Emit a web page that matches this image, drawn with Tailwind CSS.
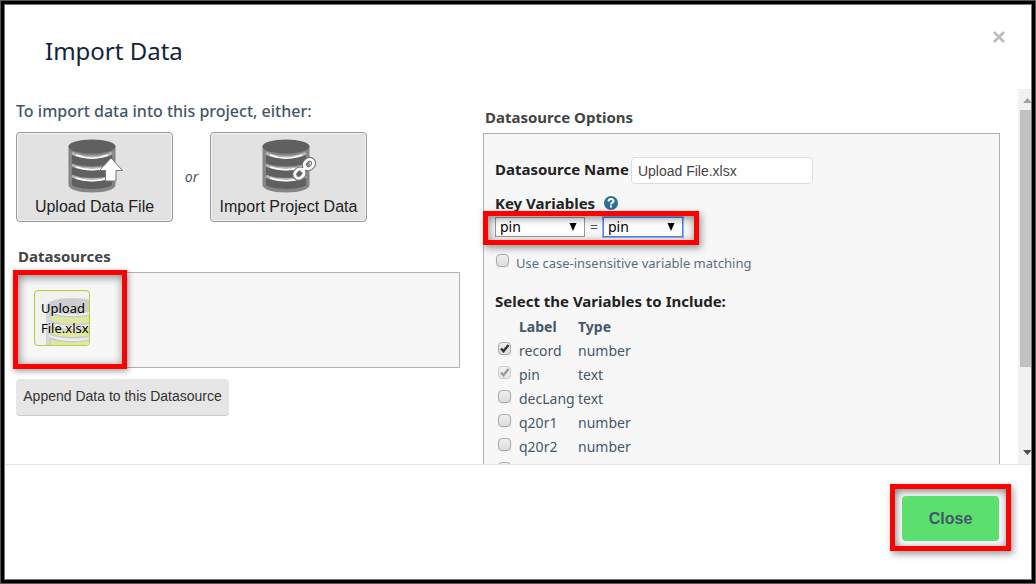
<!DOCTYPE html>
<html lang="en">
<head>
<meta charset="utf-8">
<title>Import Data</title>
<script src="https://cdn.jsdelivr.net/npm/@tailwindcss/browser@4"></script>
</head>
<body class="flex h-screen flex-col overflow-hidden border border-[#555] bg-white font-['Noto_Sans',sans-serif] text-[#44576a]">
<svg class="hidden" aria-hidden="true">
  <symbol id="database" viewBox="0 0 56 56">
    <path d="M1.500 8v39c0 4 9 7.500 23.500 7.500s23.500-3.500 23.500-7.500V8z" fill="#858585"/>
    <path d="M5 16.500c9 4.500 31 4.500 40 0v9c-9 3.500-31 3.500-40 0zM5 28c9 4.500 31 4.500 40 0v9c-9 3.500-31 3.500-40 0zM5 39c9 4.500 31 4.500 40 0v8.500c-9 4.500-31 4.500-40 0z" fill="#606060"/>
    <path d="M5 15c9 5.500 31 5.500 40 0M5 27c9 5 31 5 40 0M5 38c9 5 31 5 40 0" stroke="#b5b5b5" stroke-width="3" fill="none"/>
    <path d="M9 17c10 4 22 4 32 0M9 29c10 3.500 22 3.500 32 0M9 40c10 3.500 22 3.500 32 0" stroke="#fff" stroke-width="1.600" fill="none"/>
    <ellipse cx="25" cy="8.500" rx="23.500" ry="7" fill="#606060"/>
  </symbol>
</svg>
<div class="flex min-h-0 flex-1 flex-col border-3 border-black">
<div class="flex min-h-0 flex-1 flex-col border border-[#777]" role="dialog" aria-labelledby="title">
  <header class="flex h-21 shrink-0 items-start justify-between pr-6 pl-10">
    <h1 id="title" class="pt-7 text-2xl leading-9 text-[#14233c]">Import Data</h1>
    <button type="button" aria-label="Close dialog" class="mt-6 flex size-4 items-center justify-center">
      <svg class="size-3 text-[#bdbdbd]" viewBox="0 0 12 12" fill="none" stroke="currentColor" stroke-width="2.8"><path d="M1 1l10 10M11 1L1 11"/></svg>
    </button>
  </header>

  <main class="flex min-h-0 flex-1 overflow-hidden pl-[11px]">
    <section class="w-111 shrink-0 pt-[10px]">
      <p class="text-base leading-6 font-medium text-[#44576a]">To import data into this project, either:</p>
      <div class="mt-[9px] flex items-center">
        <button type="button" class="flex h-[90px] w-[157px] flex-col items-center rounded border border-[#999] bg-[#e2e2e2] pt-[5px] font-['Liberation_Sans',sans-serif] text-base text-[#222] inset-ring inset-ring-[#f4f4f4]">
          <svg class="size-14 shrink-0" viewBox="0 0 56 56">
            <use href="#database"/>
            <path d="M44 20L55.500 32.500h-6.500v10.500H38.500V32.500H32.500z" fill="#fff" stroke="#777"/>
          </svg>
          <span class="leading-[26px]">Upload Data File</span>
        </button>
        <em class="w-[37px] text-center text-sm">or</em>
        <button type="button" class="flex h-[90px] w-[157px] flex-col items-center rounded border border-[#999] bg-[#e2e2e2] pt-[5px] font-['Liberation_Sans',sans-serif] text-base text-[#222] inset-ring inset-ring-[#f4f4f4]">
          <svg class="size-14 shrink-0" viewBox="0 0 56 56">
            <use href="#database"/>
            <g transform="rotate(-45 43 31)" fill="none">
              <g stroke="#777" stroke-width="5"><rect x="31.500" y="27" width="10" height="8" rx="4"/><rect x="45" y="27" width="10" height="8" rx="4"/><path d="M39 31h8"/></g>
              <g stroke="#fff" stroke-width="2.800"><rect x="31.500" y="27" width="10" height="8" rx="4"/><rect x="45" y="27" width="10" height="8" rx="4"/><path d="M39 31h8"/></g>
            </g>
          </svg>
          <span class="leading-[26px]">Import Project Data</span>
        </button>
      </div>

      <h2 class="mt-[22px] pl-0.5 text-[15px] leading-6 font-bold text-[#444]">Datasources</h2>
      <div class="relative mt-1 flex h-24 border border-[#b0b0b0] bg-[#f7f7f7] pt-[17px] pl-[17px]">
        <button type="button" class="relative size-14 overflow-hidden rounded border border-[#b4cf35] bg-[#f1f1f1] pl-1.5 text-left text-[13px] leading-5 text-black">
          <svg class="absolute top-1.5 left-2.5 size-14" viewBox="0 0 56 56">
            <path d="M1 9v48h54V9z" fill="#d6d6d6"/>
            <path d="M4 13v44h51V13z" fill="#eee"/>
            <ellipse cx="27" cy="9" rx="26" ry="8" fill="#cecece"/>
            <path d="M5 16c10 5 34 5 45 0v8c-10 5-35 5-45 0zM5 29c10 5 34 5 45 0v8c-10 5-35 5-45 0zM5 41c10 5 34 5 45 0v15H5z" fill="#dfe7a3" stroke="#ccc" stroke-width="1.500"/>
          </svg>
          <span class="relative block">Upload<br>File.xlsx</span>
        </button>
        <div class="pointer-events-none absolute -top-[3px] -left-1 h-[99px] w-[114px] border-5 border-[#f00] shadow-[1px_2px_6px_#0006,inset_1px_2px_10px_#0007]"></div>
      </div>
      <button type="button" class="mt-[11px] h-[37px] w-[213px] rounded-sm border-b border-[#ccc] bg-[#e6e6e6] pb-0.5 font-['Liberation_Sans',sans-serif] text-sm whitespace-nowrap text-[#333]">Append Data to this Datasource</button>
    </section>

    <section class="ml-[23px] min-w-0 flex-1 pt-4">
      <h2 class="pl-0.5 text-[15px] leading-6 font-bold text-[#444]">Datasource Options</h2>
      <div class="mt-1 h-120 border border-[#b0b0b0] bg-[#f7f7f7] pt-[23px] pl-[11px]">
        <div class="flex items-start gap-0.5">
          <label for="dsname" class="text-[15px] leading-6 font-bold text-[#222]">Datasource Name</label>
          <input id="dsname" type="text" value="Upload File.xlsx" class="h-[27px] w-[182px] rounded border border-[#dcdcdc] bg-white px-1.5 font-['Liberation_Sans',sans-serif] text-sm text-[#444]">
        </div>
        <div class="mt-[7px] flex h-6 items-center gap-[9px]">
          <h3 class="text-[15px] leading-6 font-bold text-[#222]">Key Variables</h3>
          <a href="#" aria-label="Help on key variables" class="flex size-3.5 items-center justify-center rounded-full bg-[#2a7099]">
            <svg class="size-3.5" viewBox="0 0 14 14" fill="none" stroke="#fff" stroke-width="2"><path d="M4.500 5.500C4.500 2.300 9.500 2.300 9.500 5c0 1.700-2.500 1.500-2.500 3.500M7 9.500v2"/></svg>
          </a>
        </div>
        <div class="relative mt-0.5 flex h-5 w-[204px] items-center text-sm text-black">
          <span class="relative">
            <select aria-label="Datasource key" class="block h-5 w-[90px] appearance-none border border-[#999] bg-white pl-1 text-sm leading-4"><option>pin</option></select>
            <svg class="pointer-events-none absolute top-1.5 right-2 size-2" viewBox="0 0 8 8"><path d="M0.500 0h7L4 8z"/></svg>
          </span>
          <span class="w-[18px] text-center text-[#44576a]">=</span>
          <span class="relative">
            <select aria-label="Project key" class="block h-5 w-20 appearance-none border border-[#4d86e8] bg-white pl-1 text-sm leading-4 ring ring-[#4d86e8]/60"><option>pin</option></select>
            <svg class="pointer-events-none absolute top-1.5 right-2 size-2" viewBox="0 0 8 8"><path d="M0.500 0h7L4 8z"/></svg>
          </span>
          <div class="pointer-events-none absolute -top-1.5 -left-3 h-[34px] w-[216px] border-5 border-[#f00] shadow-[2px_3px_7px_#0006,inset_1px_2px_8px_#0007]"></div>
        </div>
        <div class="mt-3.5 flex h-6 gap-[7px]">
          <input id="ci" type="checkbox" class="mt-[3px] ml-px size-[13px] appearance-none rounded-sm border border-[#aaa] bg-linear-to-b from-[#eee] to-[#ddd] shadow-xs">
          <label for="ci" class="text-[13px] leading-6 text-[#5a6e7e]">Use case-insensitive variable matching</label>
        </div>
        <h3 class="mt-3.5 text-[15px] leading-6 font-bold text-[#222]">Select the Variables to Include:</h3>
        <table class="mt-0.5 table-fixed text-left text-sm leading-6">
          <thead><tr><th class="w-6 p-0"></th><th class="w-[59px] p-0 font-bold">Label</th><th class="w-16 p-0 font-bold">Type</th></tr></thead>
          <tbody>
            <tr class="h-6"><td class="p-0 pt-px pl-[3px] align-top"><span class="relative mt-0.5 block size-[13px]"><input id="v1" type="checkbox" checked class="block size-[13px] appearance-none rounded-sm border border-[#aaa] bg-linear-to-b from-[#eee] to-[#ddd] shadow-xs"><svg class="pointer-events-none absolute inset-0 size-[13px]" viewBox="0 0 13 13" fill="none" stroke="#333" stroke-width="2.400"><path d="M3 6.500l2.500 2.700L10.500 3"/></svg></span></td><td class="p-0"><label for="v1">record</label></td><td class="p-0">number</td></tr>
            <tr class="h-6"><td class="p-0 pt-px pl-[3px] align-top"><span class="relative mt-0.5 block size-[13px]"><input id="v2" type="checkbox" checked disabled class="block size-[13px] appearance-none rounded-sm border border-[#ccc] bg-linear-to-b from-[#f2f2f2] to-[#e8e8e8]"><svg class="pointer-events-none absolute inset-0 size-[13px]" viewBox="0 0 13 13" fill="none" stroke="#999" stroke-width="2.400"><path d="M3 6.500l2.500 2.700L10.500 3"/></svg></span></td><td class="p-0"><label for="v2">pin</label></td><td class="p-0">text</td></tr>
            <tr class="h-6"><td class="p-0 pt-px pl-[3px] align-top"><input id="v3" type="checkbox" class="mt-0.5 block size-[13px] appearance-none rounded-sm border border-[#aaa] bg-linear-to-b from-[#eee] to-[#ddd] shadow-xs"></td><td class="p-0"><label for="v3">decLang</label></td><td class="p-0">text</td></tr>
            <tr class="h-6"><td class="p-0 pt-px pl-[3px] align-top"><input id="v4" type="checkbox" class="mt-0.5 block size-[13px] appearance-none rounded-sm border border-[#aaa] bg-linear-to-b from-[#eee] to-[#ddd] shadow-xs"></td><td class="p-0"><label for="v4">q20r1</label></td><td class="p-0">number</td></tr>
            <tr class="h-6"><td class="p-0 pt-px pl-[3px] align-top"><input id="v5" type="checkbox" class="mt-0.5 block size-[13px] appearance-none rounded-sm border border-[#aaa] bg-linear-to-b from-[#eee] to-[#ddd] shadow-xs"></td><td class="p-0"><label for="v5">q20r2</label></td><td class="p-0">number</td></tr>
            <tr class="h-6"><td class="p-0 pt-px pl-[3px] align-top"><input aria-label="Next variable" type="checkbox" class="mt-0.5 block size-[13px] appearance-none rounded-sm border border-[#aaa] bg-linear-to-b from-[#eee] to-[#ddd] shadow-xs"></td><td class="p-0"></td><td class="p-0"></td></tr>
          </tbody>
        </table>
      </div>
    </section>

    <div class="ml-[18px] flex w-[13px] shrink-0 flex-col items-end overflow-hidden bg-[#f1f1f1]" aria-hidden="true">
      <svg class="mt-[9px] h-[5px] w-2 shrink-0" viewBox="0 0 8 5"><path d="M0 5L4.500 0 8 4v1z" fill="#a3a3a3"/></svg>
      <div class="mt-[7px] h-[257px] w-[11px] shrink-0 bg-[#c1c1c1]"></div>
      <svg class="mt-auto mb-[9px] h-[5px] w-2 shrink-0" viewBox="0 0 8 5"><path d="M0 0h8v1L4.500 5z" fill="#505050"/></svg>
    </div>
  </main>

  <footer class="flex h-[115px] shrink-0 justify-end border-t border-[#e5e5e5] pt-[31px] pr-8">
    <div class="relative h-[45px]">
      <div class="pointer-events-none absolute -inset-x-3 -top-3 -bottom-2.5 border-5 border-[#f00] shadow-[2px_3px_7px_#0006,inset_1px_2px_9px_#0008]"></div>
      <button type="button" class="relative h-[45px] w-[97px] rounded bg-[#5be070] font-['Liberation_Sans',sans-serif] text-base font-bold text-[#44576a]">Close</button>
    </div>
  </footer>
</div>
</div>
</body>
</html>
